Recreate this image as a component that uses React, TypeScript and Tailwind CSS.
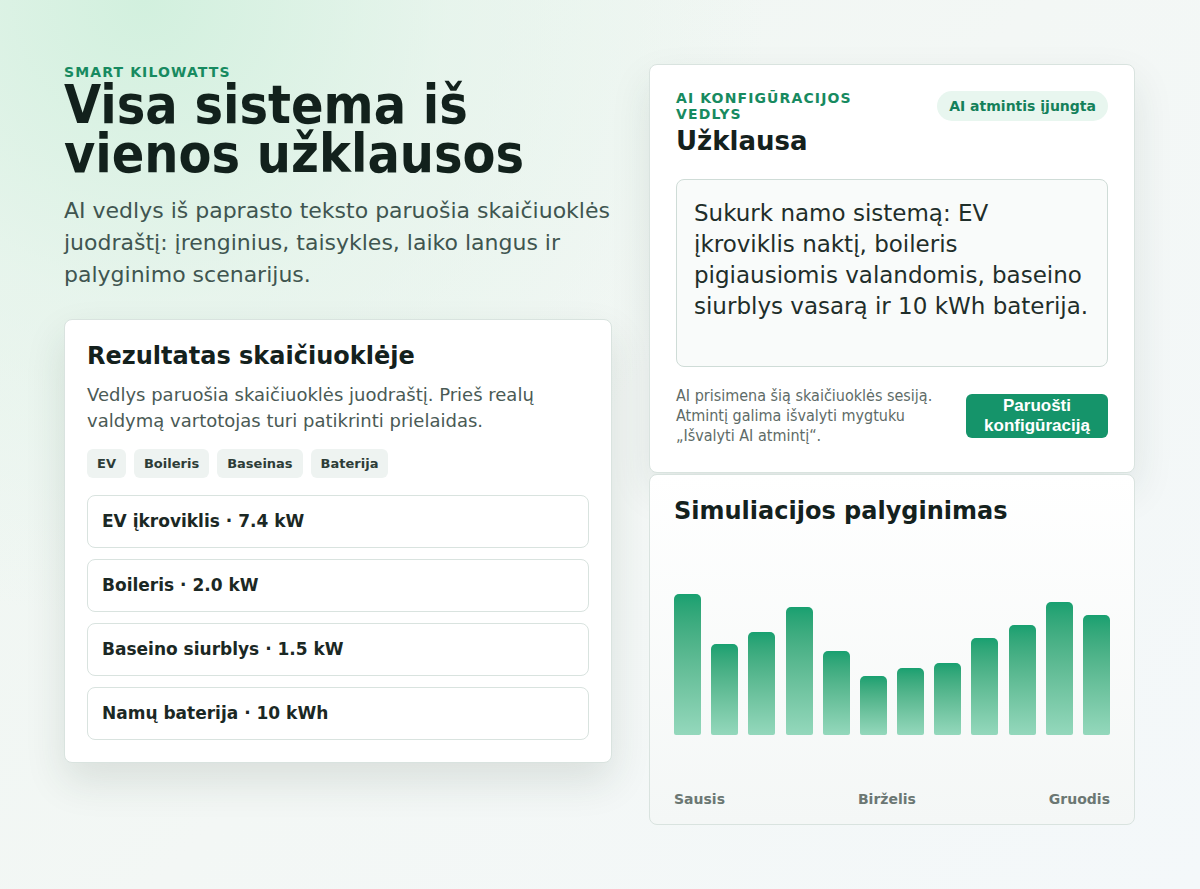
const devices = [
  "EV įkroviklis · 7.4 kW",
  "Boileris · 2.0 kW",
  "Baseino siurblys · 1.5 kW",
  "Namų baterija · 10 kWh",
];

const tags = ["EV", "Boileris", "Baseinas", "Baterija"];

// monthly simulated load, px
const bars = [141, 91, 103, 128, 84, 59, 67, 72, 97, 110, 133, 120];

function ResultCard() {
  return (
    <section className="rounded-lg border border-[#d9e3df] bg-white px-[22px] pt-[20px] pb-[22px] shadow-[0_18px_40px_rgba(30,60,45,0.12)]">
      <h2 className="text-[24px] font-bold leading-[32px] text-[#14211d]">
        Rezultatas skaičiuoklėje
      </h2>
      <p className="mt-[10px] text-[18px] leading-[26px] text-[#4a5a55]">
        Vedlys paruošia skaičiuoklės juodraštį. Prieš realų valdymą vartotojas
        turi patikrinti prielaidas.
      </p>
      <div className="mt-[15px] flex gap-[8px]">
        {tags.map((t) => (
          <span
            key={t}
            className="rounded-md bg-[#eef3f1] px-[10px] py-[5px] text-[13px] font-bold leading-[19px] text-[#2d3c37]"
          >
            {t}
          </span>
        ))}
      </div>
      <div className="mt-[17px] flex flex-col gap-[11px]">
        {devices.map((d) => (
          <div
            key={d}
            className="rounded-lg border border-[#d9e3df] px-[14px] py-[14px] text-[17px] font-bold leading-[23px] text-[#1b2824]"
          >
            {d}
          </div>
        ))}
      </div>
    </section>
  );
}

function WizardCard() {
  return (
    <section className="rounded-lg border border-[#d9e3df] bg-white px-[26px] pt-[25px] pb-[26px] shadow-[0_18px_40px_rgba(30,60,45,0.10)]">
      <div className="flex items-start justify-between gap-4">
        <div>
          <div className="w-[200px] text-[14px] font-bold uppercase leading-[16px] tracking-[0.08em] text-[#178a60]">
            AI konfigūracijos vedlys
          </div>
          <h2 className="mt-[2px] text-[26px] font-bold leading-[35px] text-[#14211d]">
            Užklausa
          </h2>
        </div>
        <span className="mt-[1px] rounded-full bg-[#e8f6ef] px-[12px] py-[5px] text-[14px] font-bold leading-[20px] text-[#14805a]">
          AI atmintis įjungta
        </span>
      </div>
      <div className="mt-[20px] h-[188px] rounded-lg border border-[#cfdcd7] bg-[#f9fbfa] pt-[18px] pr-[14px] pl-[17px] text-[23px] leading-[31px] text-[#1f2e2a]">
        Sukurk namo sistemą: EV įkroviklis naktį, boileris pigiausiomis
        valandomis, baseino siurblys vasarą ir 10 kWh baterija.
      </div>
      <div className="mt-[19px] flex items-center justify-between gap-4">
        <p className="font-['DejaVu_Sans_Condensed','DejaVu_Sans',sans-serif] text-[16px] leading-[20px] text-[#5e6b67]">
          AI prisimena šią skaičiuoklės sesiją. Atmintį galima išvalyti
          mygtuku „Išvalyti AI atmintį“.
        </p>
        <button className="w-[142px] shrink-0 rounded-md bg-[#15946a] px-[10px] py-[2px] font-['Liberation_Sans',Arial,sans-serif] text-[17px] font-bold leading-[20px] text-white">
          Paruošti konfigūraciją
        </button>
      </div>
    </section>
  );
}

function ChartCard() {
  return (
    <section className="rounded-lg border border-[#d9e3df] bg-gradient-to-b from-white to-[#f4f7f6] px-[24px] pt-[20px] pb-[16px]">
      <h2 className="text-[24px] font-bold leading-[32px] text-[#14211d]">
        Simuliacijos palyginimas
      </h2>
      <div className="mt-[23px] flex h-[185px] items-end justify-between">
        {bars.map((h, i) => (
          <div
            key={i}
            className="w-[27px] rounded-t-[5px] rounded-b-[2px] bg-gradient-to-b from-[#17a070] to-[#94d8bc]"
            style={{ height: h }}
          />
        ))}
      </div>
      <div className="mt-[55px] flex justify-between text-[14px] font-bold leading-[18px] text-[#6b7773]">
        <span>Sausis</span>
        <span>Birželis</span>
        <span>Gruodis</span>
      </div>
    </section>
  );
}

export default function App() {
  return (
    <main className="min-h-[889px] bg-[radial-gradient(circle_at_12%_0%,#d2f0de_0%,rgba(225,243,232,0.6)_22%,rgba(240,246,243,0)_45%),linear-gradient(135deg,#eef6f1_0%,#f3f7f5_50%,#f4f8fa_100%)] font-['DejaVu_Sans',sans-serif]">
      <div className="grid grid-cols-[548px_486px] gap-[37px] pl-[64px] pt-[64px]">
        <div className="flex flex-col">
          <div className="text-[14px] font-bold uppercase leading-[16px] tracking-[0.08em] text-[#178a60]">
            Smart Kilowatts
          </div>
          <h1 className="font-['DejaVu_Sans_Condensed','DejaVu_Sans',sans-serif] text-[53.4px] font-bold leading-[49px] text-[#12211c]">
            Visa sistema iš
            <br />
            vienos užklausos
          </h1>
          <p className="mt-[17px] text-[22px] leading-[32px] text-[#3f5550]">
            AI vedlys iš paprasto teksto paruošia skaičiuoklės juodraštį:
            įrenginius, taisykles, laiko langus ir palyginimo scenarijus.
          </p>
          <div className="mt-[28px]">
            <ResultCard />
          </div>
        </div>
        <div className="flex flex-col gap-[1px]">
          <WizardCard />
          <ChartCard />
        </div>
      </div>
    </main>
  );
}
